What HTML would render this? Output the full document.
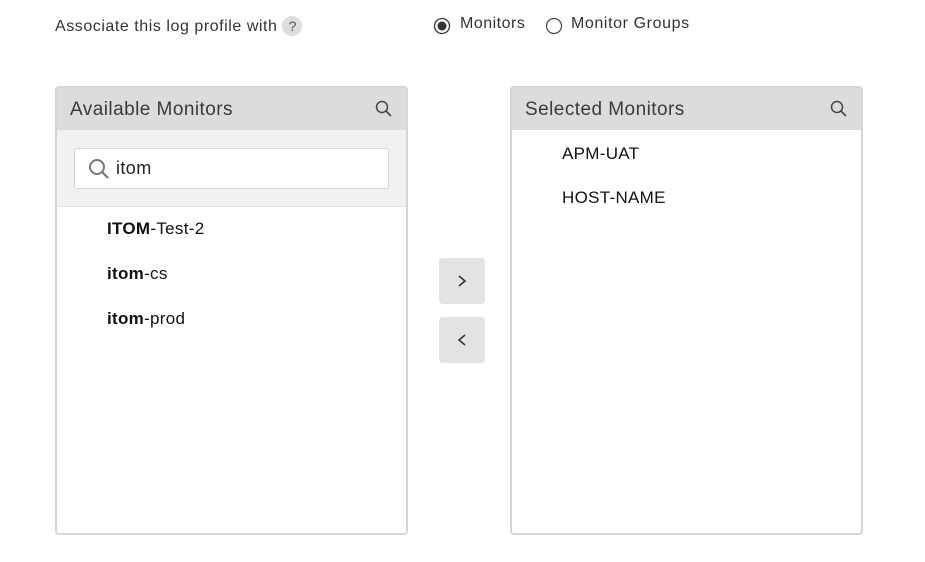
<!DOCTYPE html>
<html><head><style>
body{margin:0;width:925px;height:562px;background:#fff;font-family:"Liberation Sans",sans-serif;color:#333;position:relative;overflow:hidden}
.a{position:absolute}
.panel{position:absolute;top:86px;width:349px;height:445px;border:2px solid #d6d6d6;border-radius:4px;overflow:hidden;background:#fff}
.hd{height:42px;background:#dcdcdc;font-size:19px;line-height:44px;padding-left:13px;color:#3a3a3a;position:relative;letter-spacing:0.45px}
.hd svg{position:absolute;right:13px;top:12px}
.it{position:absolute;font-size:17px;color:#111;letter-spacing:0.3px}
.btn{position:absolute;left:439px;width:46px;height:46px;background:#e3e3e3;border-radius:4px}
.btn svg{position:absolute;left:17px;top:16px}
</style></head><body>
<div class="a" style="left:55px;top:16px;font-size:16px;color:#333;letter-spacing:0.55px">Associate this log profile with <span style="display:inline-block;width:20px;height:20px;border-radius:50%;background:#ddd;text-align:center;line-height:20px;font-size:14px;color:#555;letter-spacing:0">?</span></div>
<svg class="a" style="left:433px;top:17px" width="18" height="18"><circle cx="9" cy="9" r="7.5" fill="none" stroke="#333" stroke-width="1.3"/><circle cx="9" cy="9" r="4.5" fill="#333"/></svg>
<div class="a" style="left:460px;top:15px;font-size:16px;color:#333;letter-spacing:0.5px">Monitors</div>
<svg class="a" style="left:545px;top:17px" width="18" height="18"><circle cx="9" cy="9" r="7.5" fill="none" stroke="#444" stroke-width="1.2"/></svg>
<div class="a" style="left:571px;top:15px;font-size:16px;color:#333;letter-spacing:0.6px">Monitor Groups</div>

<div class="panel" style="left:55px">
<div class="hd">Available Monitors<svg width="18" height="18"><circle cx="7" cy="7" r="5.5" fill="none" stroke="#444" stroke-width="1.5"/><path d="M11 11l5 5" stroke="#444" stroke-width="1.6"/></svg></div>
<div style="height:76px;background:#f1f1f1;border-bottom:1px solid #e2e2e2;position:relative">
<div style="position:absolute;left:17px;top:18px;width:313px;height:39px;background:#fff;border:1px solid #d6d6d6;border-radius:3px">
<svg style="position:absolute;left:13px;top:9px" width="22" height="22"><circle cx="9" cy="9" r="7" fill="none" stroke="#777" stroke-width="2"/><path d="M14 14l6 6" stroke="#777" stroke-width="2.2"/></svg>
<span style="position:absolute;left:41px;top:9px;font-size:18px;color:#222;letter-spacing:0.4px">itom</span></div></div>
<div class="it" style="left:50px;top:131px"><b>ITOM</b>-Test-2</div>
<div class="it" style="left:50px;top:176px"><b>itom</b>-cs</div>
<div class="it" style="left:50px;top:221px"><b>itom</b>-prod</div>
</div>

<div class="btn" style="top:258px"><svg width="12" height="14"><path d="M3 2l6 5-6 5" fill="none" stroke="#333" stroke-width="1.6"/></svg></div>
<div class="btn" style="top:317px"><svg width="12" height="14"><path d="M9 2l-6 5 6 5" fill="none" stroke="#333" stroke-width="1.6"/></svg></div>

<div class="panel" style="left:510px">
<div class="hd">Selected Monitors<svg width="18" height="18"><circle cx="7" cy="7" r="5.5" fill="none" stroke="#444" stroke-width="1.5"/><path d="M11 11l5 5" stroke="#444" stroke-width="1.6"/></svg></div>
<div class="it" style="left:50px;top:56px">APM-UAT</div>
<div class="it" style="left:50px;top:100px">HOST-NAME</div>
</div>
</body></html>
